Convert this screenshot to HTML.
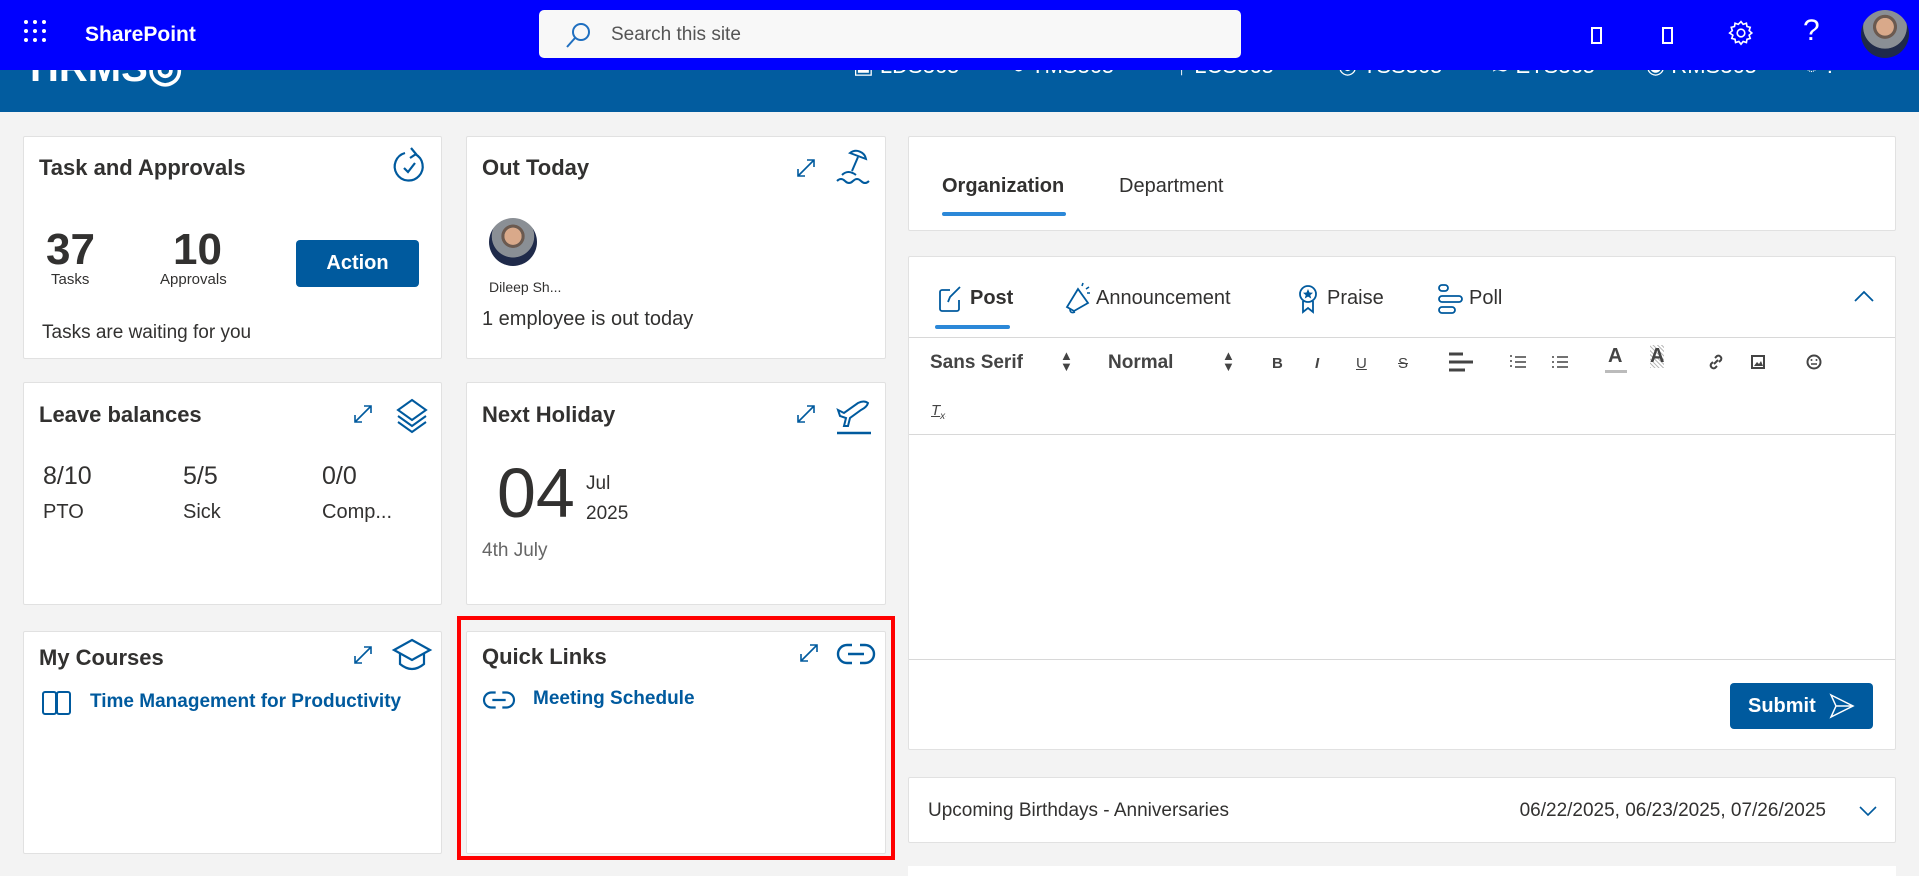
<!DOCTYPE html>
<html><head><meta charset="utf-8"><style>
*{box-sizing:border-box;margin:0;padding:0}
body{width:1919px;height:869px;overflow:hidden;background:#f3f3f3;font-family:"Liberation Sans",sans-serif;color:#323130;position:relative}
.a{position:absolute;white-space:nowrap}
.card{position:absolute;background:#fff;border:1px solid #e1e1e1;border-radius:2px}
.t{position:absolute;font-size:22px;font-weight:bold;color:#323130;line-height:1}
.blue{color:#005a9e}
svg{position:absolute;overflow:visible}
.nav{position:absolute;top:46px;color:#fff;font-size:22px;line-height:40px}
</style></head><body>
<div class="a" style="left:0;top:70px;width:1919px;height:42px;background:#025c9f"></div>
<div class="nav" style="left:30px;font-size:40px;font-weight:bold;top:38px;line-height:60px">HRMS◎</div>
<div class="nav" style="left:853px">▣ LDS365</div>
<div class="nav" style="left:1012px">● TMS365</div>
<div class="nav" style="left:1175px">ᛉ LCS365</div>
<div class="nav" style="left:1338px">◎ TSS365</div>
<div class="nav" style="left:1491px">≋ ETS365</div>
<div class="nav" style="left:1646px">◉ RMS365</div>
<div class="nav" style="left:1805px">◌ ?</div>
<div class="a" style="left:0;top:0;width:1919px;height:70px;background:#0000ff"></div>
<svg style="left:24px;top:20px" width="22" height="22"><g fill="#fff"><circle cx="2" cy="2" r="2"/><circle cx="11" cy="2" r="2"/><circle cx="20" cy="2" r="2"/><circle cx="2" cy="11" r="2"/><circle cx="11" cy="11" r="2"/><circle cx="20" cy="11" r="2"/><circle cx="2" cy="20" r="2"/><circle cx="11" cy="20" r="2"/><circle cx="20" cy="20" r="2"/></g></svg>
<div class="a" style="left:85px;top:23px;color:#fff;font-size:21px;font-weight:bold">SharePoint</div>
<div class="a" style="left:539px;top:10px;width:702px;height:48px;background:#f8f8f8;border-radius:5px"></div>
<svg style="left:565px;top:22px" width="26" height="26"><circle cx="16" cy="10" r="8" fill="none" stroke="#1f6fc0" stroke-width="2"/><line x1="10" y1="16" x2="2" y2="25" stroke="#1f6fc0" stroke-width="2"/></svg>
<div class="a" style="left:611px;top:24px;color:#555;font-size:19px">Search this site</div>
<div class="a" style="left:1591px;top:27px;width:11px;height:17px;border:2px solid #fff"></div>
<div class="a" style="left:1662px;top:27px;width:11px;height:17px;border:2px solid #fff"></div>
<svg style="left:1728px;top:20px" width="26" height="26" viewBox="0 0 24 24"><path fill="none" stroke="#fff" stroke-width="1.5" d="M12 1.5l2 2.5 3-1 .5 3 3 .8-1 3 2.5 2.2-2.5 2 1 3-3 .8-.5 3-3-1-2 2.5-2-2.5-3 1-.5-3-3-.8 1-3L1.5 12 4 9.8l-1-3 3-.8.5-3 3 1z"/><circle cx="12" cy="12" r="3.5" fill="none" stroke="#fff" stroke-width="1.5"/></svg>
<div class="a" style="left:1803px;top:14px;color:#fff;font-size:30px">?</div>
<div class="a" style="left:1861px;top:10px;width:48px;height:48px;border-radius:50%;background:radial-gradient(circle at 50% 35%,#d9a98a 0 22%,#6b5a50 23% 30%,#8a8f95 31% 55%,#1f2a4a 56%)"></div>

<div class="card" style="left:23px;top:136px;width:419px;height:223px"></div>
<div class="t" style="left:39px;top:157px">Task and Approvals</div>
<svg style="left:393px;top:146px" width="34" height="38" viewBox="0 0 34 38"><path d="M22 8a14 14 0 1 1-10-1" fill="none" stroke="#005a9e" stroke-width="2.2"/><path d="M18 2l5 6-6 4" fill="none" stroke="#005a9e" stroke-width="2.2"/><path d="M11 22l4 4 7-9" fill="none" stroke="#005a9e" stroke-width="2.2"/></svg>
<div class="a" style="left:46px;top:228px;font-size:44px;font-weight:bold;line-height:1">37</div>
<div class="a" style="left:51px;top:271px;font-size:15px">Tasks</div>
<div class="a" style="left:173px;top:228px;font-size:44px;font-weight:bold;line-height:1">10</div>
<div class="a" style="left:160px;top:271px;font-size:15px">Approvals</div>
<div class="a" style="left:296px;top:240px;width:123px;height:47px;background:#005a9e;border-radius:4px;color:#fff;font-size:20px;font-weight:bold;text-align:center;line-height:47px">Action</div>
<div class="a" style="left:42px;top:322px;font-size:19px">Tasks are waiting for you</div>

<div class="card" style="left:466px;top:136px;width:420px;height:223px"></div>
<div class="t" style="left:482px;top:157px">Out Today</div>
<svg style="left:796px;top:158px" width="20" height="20"><path d="M2 18L18 2M2 11v7h7M18 9V2h-7" fill="none" stroke="#005a9e" stroke-width="1.6"/></svg>
<svg style="left:836px;top:147px" width="36" height="38" viewBox="0 0 36 38"><path d="M14 6a10 10 0 0 1 16 6L14 6z" fill="none" stroke="#005a9e" stroke-width="2"/><path d="M22 10l-6 14" stroke="#005a9e" stroke-width="2"/><path d="M6 28q6-6 14 0M1 34q4-4 8 0t8 0 8 0 8 0" fill="none" stroke="#005a9e" stroke-width="2"/></svg>
<div class="a" style="left:489px;top:218px;width:48px;height:48px;border-radius:50%;background:radial-gradient(circle at 50% 38%,#d9a98a 0 22%,#6b5a50 23% 30%,#8a8f95 31% 55%,#1f2a4a 56%)"></div>
<div class="a" style="left:489px;top:279px;font-size:14px">Dileep Sh...</div>
<div class="a" style="left:482px;top:308px;font-size:20px">1 employee is out today</div>

<div class="card" style="left:23px;top:382px;width:419px;height:223px"></div>
<div class="t" style="left:39px;top:404px">Leave balances</div>
<svg style="left:353px;top:404px" width="20" height="20"><path d="M2 18L18 2M2 11v7h7M18 9V2h-7" fill="none" stroke="#005a9e" stroke-width="1.6"/></svg>
<svg style="left:395px;top:398px" width="34" height="34" viewBox="0 0 34 34"><path d="M17 2L31 12 17 22 3 12z" fill="none" stroke="#005a9e" stroke-width="2"/><path d="M3 18l14 10 14-10M3 24l14 10 14-10" fill="none" stroke="#005a9e" stroke-width="2"/></svg>
<div class="a" style="left:43px;top:462px;font-size:25px">8/10</div>
<div class="a" style="left:43px;top:501px;font-size:20px">PTO</div>
<div class="a" style="left:183px;top:462px;font-size:25px">5/5</div>
<div class="a" style="left:183px;top:501px;font-size:20px">Sick</div>
<div class="a" style="left:322px;top:462px;font-size:25px">0/0</div>
<div class="a" style="left:322px;top:501px;font-size:20px">Comp...</div>

<div class="card" style="left:466px;top:382px;width:420px;height:223px"></div>
<div class="t" style="left:482px;top:404px">Next Holiday</div>
<svg style="left:796px;top:404px" width="20" height="20"><path d="M2 18L18 2M2 11v7h7M18 9V2h-7" fill="none" stroke="#005a9e" stroke-width="1.6"/></svg>
<svg style="left:836px;top:398px" width="36" height="36" viewBox="0 0 36 36"><path d="M2 12l6 3 14-10q6-3 10 0-1 4-7 7L14 20l-2 8-4 0 2-8-6-2z" fill="none" stroke="#005a9e" stroke-width="2"/><line x1="1" y1="35" x2="35" y2="35" stroke="#005a9e" stroke-width="2.5"/></svg>
<div class="a" style="left:497px;top:458px;font-size:70px;line-height:1;color:#323130">04</div>
<div class="a" style="left:586px;top:473px;font-size:19px">Jul</div>
<div class="a" style="left:586px;top:503px;font-size:19px">2025</div>
<div class="a" style="left:482px;top:540px;font-size:19px;color:#666">4th July</div>

<div class="card" style="left:23px;top:631px;width:419px;height:223px"></div>
<div class="t" style="left:39px;top:647px">My Courses</div>
<svg style="left:353px;top:645px" width="20" height="20"><path d="M2 18L18 2M2 11v7h7M18 9V2h-7" fill="none" stroke="#005a9e" stroke-width="1.6"/></svg>
<svg style="left:392px;top:638px" width="40" height="34" viewBox="0 0 40 34"><path d="M20 2L38 12 20 22 2 12z" fill="none" stroke="#005a9e" stroke-width="2.2"/><path d="M8 16v10q12 10 24 0V16" fill="none" stroke="#005a9e" stroke-width="2.2"/></svg>
<svg style="left:42px;top:691px" width="30" height="24"><rect x="1" y="1" width="13" height="22" rx="2" fill="none" stroke="#005a9e" stroke-width="2"/><rect x="15" y="1" width="13" height="22" rx="2" fill="none" stroke="#005a9e" stroke-width="2"/></svg>
<div class="a blue" style="left:90px;top:691px;font-size:19px;font-weight:bold">Time Management for Productivity</div>

<div class="card" style="left:466px;top:631px;width:420px;height:223px"></div>
<div class="t" style="left:482px;top:646px">Quick Links</div>
<svg style="left:799px;top:643px" width="20" height="20"><path d="M2 18L18 2M2 11v7h7M18 9V2h-7" fill="none" stroke="#005a9e" stroke-width="1.6"/></svg>
<svg style="left:838px;top:642px" width="36" height="24" viewBox="0 0 36 24"><path d="M14 3H9a9 9 0 0 0 0 18h5M22 3h5a9 9 0 0 1 0 18h-5M10 12h16" fill="none" stroke="#005a9e" stroke-width="2.4"/></svg>
<svg style="left:483px;top:690px" width="32" height="20" viewBox="0 0 36 24"><path d="M14 3H9a9 9 0 0 0 0 18h5M22 3h5a9 9 0 0 1 0 18h-5M10 12h16" fill="none" stroke="#005a9e" stroke-width="2.6"/></svg>
<div class="a blue" style="left:533px;top:688px;font-size:19px;font-weight:bold">Meeting Schedule</div>
<div class="a" style="left:457px;top:616px;width:438px;height:244px;border:4px solid #ff0000"></div>

<div class="card" style="left:908px;top:136px;width:988px;height:95px"></div>
<div class="a" style="left:942px;top:175px;font-size:20px;font-weight:bold">Organization</div>
<div class="a" style="left:942px;top:212px;width:124px;height:4px;background:#2b88d8;border-radius:2px"></div>
<div class="a" style="left:1119px;top:175px;font-size:20px">Department</div>

<div class="card" style="left:908px;top:256px;width:988px;height:494px"></div>
<svg style="left:938px;top:285px" width="26" height="28"><path d="M12 5H4a2 2 0 0 0-2 2v17a2 2 0 0 0 2 2h15a2 2 0 0 0 2-2v-9M10 17l2-5L22 2" fill="none" stroke="#005a9e" stroke-width="1.8"/></svg>
<div class="a" style="left:970px;top:287px;font-size:20px;font-weight:bold">Post</div>
<div class="a" style="left:935px;top:325px;width:75px;height:4px;background:#2b88d8;border-radius:2px"></div>
<svg style="left:1064px;top:283px" width="26" height="32"><path d="M14 6L3 24l7 4L24 20z" fill="none" stroke="#005a9e" stroke-width="1.8"/><path d="M6 26q0 5 5 3M18 3l1-3M22 6l3-2M23 10h3" fill="none" stroke="#005a9e" stroke-width="1.6"/></svg>
<div class="a" style="left:1096px;top:287px;font-size:20px">Announcement</div>
<svg style="left:1298px;top:284px" width="20" height="30"><circle cx="10" cy="10" r="8" fill="none" stroke="#005a9e" stroke-width="1.8"/><path d="M10 5l1.5 3.5 3.5.3-2.7 2.3.9 3.4L10 12.6 6.8 14.5l.9-3.4L5 8.8l3.5-.3z" fill="#005a9e"/><path d="M5 17v11l5-4 5 4V17" fill="none" stroke="#005a9e" stroke-width="1.8"/></svg>
<div class="a" style="left:1327px;top:287px;font-size:20px">Praise</div>
<svg style="left:1438px;top:284px" width="26" height="30"><rect x="1" y="1" width="9" height="6" rx="3" fill="none" stroke="#005a9e" stroke-width="1.8"/><rect x="1" y="12" width="23" height="6" rx="3" fill="none" stroke="#005a9e" stroke-width="1.8"/><rect x="1" y="23" width="16" height="6" rx="3" fill="none" stroke="#005a9e" stroke-width="1.8"/></svg>
<div class="a" style="left:1469px;top:287px;font-size:20px">Poll</div>
<svg style="left:1854px;top:290px" width="20" height="12"><path d="M1 11L10 2l9 9" fill="none" stroke="#005a9e" stroke-width="1.8"/></svg>
<div class="a" style="left:909px;top:337px;width:986px;height:1px;background:#d8d8d8"></div>
<div class="a" style="left:930px;top:352px;font-size:19px;font-weight:bold;color:#444">Sans Serif</div>
<div class="a" style="left:1060px;top:350px;font-size:13px;line-height:11px;color:#444">▲<br>▼</div>
<div class="a" style="left:1108px;top:352px;font-size:19px;font-weight:bold;color:#444">Normal</div>
<div class="a" style="left:1222px;top:350px;font-size:13px;line-height:11px;color:#444">▲<br>▼</div>
<div class="a" style="left:1272px;top:355px;font-size:15px;font-weight:bold;color:#444">B</div>
<div class="a" style="left:1315px;top:355px;font-size:15px;font-weight:bold;font-style:italic;color:#444">I</div>
<div class="a" style="left:1356px;top:355px;font-size:15px;text-decoration:underline;color:#444">U</div>
<div class="a" style="left:1398px;top:355px;font-size:15px;text-decoration:line-through;color:#444">S</div>
<svg style="left:1449px;top:352px" width="24" height="20"><path d="M0 2h14M0 10h24M0 18h16" stroke="#444" stroke-width="3"/></svg>
<svg style="left:1510px;top:355px" width="16" height="14"><path d="M5 2h11M5 7h11M5 12h11" stroke="#444" stroke-width="1.6"/><path d="M0 1h2M0 6h2M0 11h2" stroke="#444" stroke-width="1.6"/></svg>
<svg style="left:1552px;top:355px" width="16" height="14"><path d="M5 2h11M5 7h11M5 12h11M0 2h2M0 7h2M0 12h2" stroke="#444" stroke-width="1.6"/></svg>
<div class="a" style="left:1608px;top:345px;font-size:20px;font-weight:bold;color:#444">A</div>
<div class="a" style="left:1605px;top:370px;width:22px;height:3px;background:#bbb"></div>
<div class="a" style="left:1650px;top:345px;font-size:20px;font-weight:bold;color:#444;background:repeating-linear-gradient(45deg,#bbb 0 1px,#fff 1px 3px)">A</div>
<svg style="left:1708px;top:354px" width="16" height="16"><path d="M6 10l4-4M7 4l2-2a3 3 0 0 1 4 4l-2 2M9 12l-2 2a3 3 0 0 1-4-4l2-2" fill="none" stroke="#444" stroke-width="2"/></svg>
<svg style="left:1751px;top:355px" width="14" height="14"><rect x="1" y="1" width="12" height="12" fill="none" stroke="#444" stroke-width="2"/><path d="M3 11l3-4 2 2 2-3 2 5z" fill="#444"/></svg>
<svg style="left:1806px;top:354px" width="16" height="16"><circle cx="8" cy="8" r="6.5" fill="none" stroke="#444" stroke-width="2"/><circle cx="5.5" cy="6" r="1" fill="#444"/><circle cx="10.5" cy="6" r="1" fill="#444"/><path d="M5 10h6" stroke="#444" stroke-width="1.5"/></svg>
<div class="a" style="left:931px;top:402px;font-size:15px;font-style:italic;text-decoration:underline;color:#444">T<sub style="font-size:10px">x</sub></div>
<div class="a" style="left:909px;top:434px;width:986px;height:1px;background:#d8d8d8"></div>
<div class="a" style="left:909px;top:659px;width:986px;height:1px;background:#d8d8d8"></div>
<div class="a" style="left:1730px;top:683px;width:143px;height:46px;background:#005a9e;border-radius:4px"></div>
<div class="a" style="left:1748px;top:695px;font-size:20px;font-weight:bold;color:#fff">Submit</div>
<svg style="left:1829px;top:693px" width="26" height="26"><path d="M2 2l22 11L2 24l5-11zM7 13h17" fill="none" stroke="#fff" stroke-width="1.5"/></svg>

<div class="card" style="left:908px;top:777px;width:988px;height:66px"></div>
<div class="a" style="left:928px;top:800px;font-size:19px">Upcoming Birthdays - Anniversaries</div>
<div class="a" style="right:93px;top:800px;font-size:19px">06/22/2025, 06/23/2025, 07/26/2025</div>
<svg style="left:1859px;top:806px" width="18" height="11"><path d="M1 1l8 8 8-8" fill="none" stroke="#005a9e" stroke-width="1.6"/></svg>
<div class="a" style="left:908px;top:866px;width:988px;height:10px;background:#fff"></div>
</body></html>
